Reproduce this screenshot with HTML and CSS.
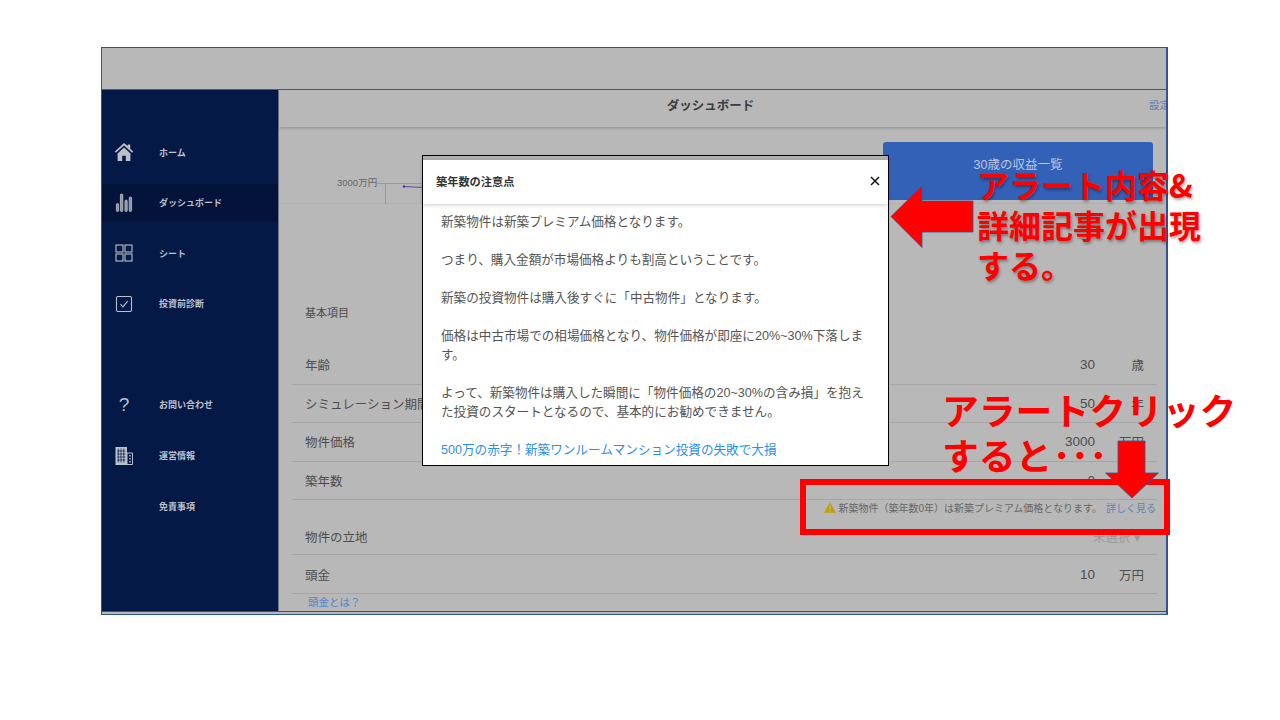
FILE: index.html
```html
<!DOCTYPE html>
<html lang="ja">
<head>
  <meta charset="UTF-8" />
  <title>ダッシュボード</title>
  <link rel="stylesheet" href="styles.css">
</head>
<body>
  <div class="frame">
    <div class="topband"></div>
    <div class="app">
      <nav class="side">
        <a class="nav-item">
          <svg class="nav-icon" viewBox="0 0 20 20"><path fill="#bcc0ca" d="M10 1 0.800 9.600l1 1.100L10 3.400l8.200 7.300 1-1.100-3-2.800V2.400h-2.400v1.700zM3.600 11.400V19h4.600v-5.200h3.600V19h4.600v-7.600L10 5.600z"/></svg>
          <span>ホーム</span>
        </a>
        <a class="nav-item active">
          <svg class="nav-icon" viewBox="0 0 20 20" fill="#8e94a3" stroke="#bcc0ca" stroke-width=".8"><rect x="2.400" y="10.500" width="2.200" height="8" rx="1"/><rect x="6.400" y="1" width="2.400" height="17.500" rx="1"/><rect x="11" y="7" width="2.200" height="11.500" rx="1"/><rect x="15.200" y="4" width="2.400" height="14.500" rx="1"/></svg>
          <span>ダッシュボード</span>
        </a>
        <a class="nav-item">
          <svg class="nav-icon" viewBox="0 0 20 20" fill="none" stroke="#bcc0ca" stroke-width="1.100"><rect x="2" y="2" width="7" height="7"/><rect x="11" y="2" width="7" height="7"/><rect x="2" y="11" width="7" height="7"/><rect x="11" y="11" width="7" height="7"/></svg>
          <span>シート</span>
        </a>
        <a class="nav-item">
          <svg class="nav-icon" viewBox="0 0 20 20" fill="none" stroke="#bcc0ca" stroke-width="1.100"><rect x="2.500" y="2.500" width="15" height="15" rx="1.500"/><path d="M6.500 10.200 9 12.800l4.600-5.600"/></svg>
          <span>投資前診断</span>
        </a>
        <div class="nav-gap"></div>
        <a class="nav-item">
          <span class="nav-icon q">?</span>
          <span>お問い合わせ</span>
        </a>
        <a class="nav-item">
          <svg class="nav-icon" viewBox="0 0 20 20"><path fill="#bcc0ca" d="M1.500 1h11.500v18H1.500z"/><path fill="none" stroke="#bcc0ca" stroke-width="1" d="M13 7h5.500v11.500H13z"/><path fill="#8e94a3" d="M15 9h2v1.500h-2zM15 12h2v1.500h-2zM15 15h2v1.500h-2z"/><path stroke="#051946" stroke-width=".7" d="M4.300 2.500v14M7 2.500v14M9.800 2.500v14M3 5h8.500M3 8h8.500M3 11h8.500M3 14h8.500"/></svg>
          <span>運営情報</span>
        </a>
        <a class="nav-item">
          <span class="nav-icon"></span>
          <span>免責事項</span>
        </a>
      </nav>

      <main class="main">
        <header class="head">
          <h1>ダッシュボード</h1>
          <a class="settings">設定</a>
        </header>
        <section class="top">
          <div class="chart">
            <span class="tick">3000万円</span>
            <svg class="plot" width="145" height="24" viewBox="0 0 145 24" fill="none">
              <path stroke="#9a9a9a" d="M0 3.500h46M8.500 3v21"/>
              <path stroke="#6a3fa8" d="M27 6.500l20 1"/>
              <circle cx="27" cy="6.500" r="1.200" fill="#5a2ea0"/>
            </svg>
          </div>
          <button class="summary">30歳の収益一覧</button>
        </section>

        <section class="form">
          <h2>基本項目</h2>
          <div class="row"><span>年齢</span><b>30</b><i>歳</i></div>
          <div class="row"><span>シミュレーション期間</span><b>50</b><i>年</i></div>
          <div class="row"><span>物件価格</span><b>3000</b><i>万円</i></div>
          <div class="row"><span>築年数</span><b>0</b><i></i></div>
          <div class="alert">
            <svg class="warn" viewBox="0 0 12 11"><path fill="#bfa100" d="M6 .3 11.800 10.700H.2z"/><path stroke="#b8b8b8" stroke-width="1.200" d="M6 3.800v3.600M6 8.200v1.300"/></svg>
            <span>新築物件（築年数0年）は新築プレミアム価格となります。</span>
            <a>詳しく見る</a>
          </div>
          <div class="row place"><span>物件の立地</span><em>未選択 ▾</em></div>
          <div class="row"><span>頭金</span><b>10</b><i>万円</i></div>
          <a class="help">頭金とは？</a>
        </section>
      </main>
    </div>

    <div class="modal">
      <div class="modal-head">
        <span>築年数の注意点</span>
        <svg class="close" viewBox="0 0 10 10"><path stroke="#111" stroke-width="1.500" d="M1 1l8 8M9 1l-8 8"/></svg>
      </div>
      <div class="modal-body">
        <p>新築物件は新築プレミアム価格となります。</p>
        <p>つまり、購入金額が市場価格よりも割高ということです。</p>
        <p>新築の投資物件は購入後すぐに「中古物件」となります。</p>
        <p>価格は中古市場での相場価格となり、物件価格が即座に20%~30%下落します。</p>
        <p>よって、新築物件は購入した瞬間に「物件価格の20~30%の含み損」を抱えた投資のスタートとなるので、基本的にお勧めできません。</p>
        <p><a>500万の赤字！新築ワンルームマンション投資の失敗で大損</a></p>
      </div>
    </div>
  </div>

  <div class="note note-a">アラート内容&amp;<br>詳細記事が出現<br>する。</div>
  <div class="note note-b">アラートクリック<br>すると･･･</div>
  <div class="redbox"></div>
  <svg class="arrow-left" width="86" height="64" viewBox="0 0 86 64"><path fill="#f00" stroke="#2f5597" stroke-width=".8" d="M1 31.500 32 1v15h51v31H32v15.500z"/></svg>
  <svg class="arrow-down" width="56" height="60" viewBox="0 0 56 60"><path fill="#f00" stroke="#2f5597" stroke-width=".8" d="M14 1h27v32h13.500L28 58 1.500 33H14z"/></svg>
</body>
</html>
```

FILE: styles.css
```css
body {
  margin: 0;
  background: #fff;
  font-family: "Liberation Sans", "Noto Sans CJK JP", sans-serif;
  color: #4d4d4d;
}
.frame {
  position: relative;
  box-sizing: border-box;
  width: 1067px;
  height: 568px;
  margin: 47px 0 0 101px;
  background: #b8b8b8;
  border: 1px solid #2f5597;
  border-top-color: #4a4f5a;
  border-right-width: 2px;
  overflow: hidden;
}
.topband {
  height: 41px;
  background: #b8b8b8;
  border-bottom: 1px solid #3f5d94;
}
.app {
  display: flex;
  box-sizing: border-box;
  height: 522px;
  border-bottom: 1px solid #2f5597;
}

/* sidebar */
.side {
  box-sizing: border-box;
  width: 177px;
  flex: none;
  padding-top: 43px;
  background: #051946;
  border-right: 1px solid #6d7488;
}
.nav-item {
  display: flex;
  align-items: center;
  height: 38px;
  margin-bottom: 12.600px;
  padding-left: 12px;
  font-size: 9px;
  font-weight: 700;
  color: #bcc0ca;
}
.nav-item.active {
  background: #04133a;
}
.nav-gap {
  height: 50.600px;
}
.nav-icon {
  width: 20px;
  height: 20px;
  margin-right: 25px;
  flex: none;
}
.q {
  font-size: 19px;
  font-weight: 400;
  line-height: 20px;
  text-align: center;
}

/* main column */
.main {
  flex: 1;
  min-width: 0;
  background: #b8b8b8;
}
.head {
  position: relative;
  box-sizing: border-box;
  height: 37px;
  padding: 0 24px 8px 0;
  display: flex;
  align-items: center;
  justify-content: center;
  box-shadow: 0 1px 3px rgba(0, 0, 0, 0.22);
}
.head h1 {
  margin: 0;
  font-size: 12.500px;
  font-weight: 700;
  color: #3c3c3c;
}
.settings {
  position: absolute;
  top: 7px;
  right: -7px;
  width: 24px;
  font-size: 10.500px;
  color: #5f7fb8;
}
.top {
  display: flex;
  justify-content: space-between;
  height: 161px;
  padding: 15px 13px 0 58px;
  background: linear-gradient(#b0b0b0, #b0b0b0) 0 76px / 100% 1px no-repeat;
}
.chart {
  display: flex;
  align-items: flex-start;
  width: 190px;
  margin-top: 33px;
}
.tick {
  width: 40px;
  font-size: 9.500px;
  white-space: nowrap;
  color: #666;
}
.plot {
  margin-top: 5px;
}
.summary {
  box-sizing: border-box;
  width: 270px;
  height: 58px;
  padding: 0 0 16px;
  border: 0;
  border-radius: 3px;
  background: #3361b8;
  font: inherit;
  font-size: 12.500px;
  color: #b9c6df;
}

/* form rows */
.form {
  margin: 0 9px 0 13px;
}
.form h2 {
  margin: 0;
  padding-left: 13px;
  font-size: 11px;
  font-weight: 400;
  line-height: 20px;
}
.row {
  display: flex;
  align-items: center;
  box-sizing: border-box;
  height: 38.600px;
  padding-left: 13px;
  border-bottom: 1px solid #a6a6a6;
  font-size: 12.500px;
}
.row:first-of-type {
  margin-top: 23px;
}
.row span {
  flex: 1;
}
.row b {
  width: 60px;
  font-weight: 400;
  font-size: 13.500px;
  text-align: right;
}
.row i {
  width: 49px;
  margin-right: 13px;
  font-style: normal;
  text-align: right;
}
.row em {
  margin-right: 16px;
  font-style: normal;
  font-size: 12.500px;
  color: #9a9a9a;
}
.alert {
  display: flex;
  align-items: center;
  justify-content: flex-end;
  box-sizing: border-box;
  height: 16px;
  padding-bottom: 2px;
  font-size: 10px;
  color: #666;
}
.warn {
  width: 12px;
  height: 11px;
  margin-right: 2px;
}
.alert a {
  margin: 0 1px 0 4px;
  color: #5f82b8;
}
.row.place {
  height: 39px;
  padding-top: 2px;
}
.help {
  display: block;
  padding-left: 16px;
  font-size: 10.500px;
  line-height: 17px;
  color: #5580c4;
}

/* modal */
.modal {
  position: absolute;
  left: 320px;
  top: 107px;
  box-sizing: border-box;
  width: 467px;
  height: 311px;
  padding-top: 4px;
  background: #fff;
  border: 1px solid #000;
  box-shadow: inset 0 4px 0 #b0b0b0;
}
.modal-head {
  display: flex;
  align-items: center;
  justify-content: space-between;
  box-sizing: border-box;
  height: 44px;
  padding: 0 8px 2px 13px;
  font-size: 11.200px;
  font-weight: 700;
  color: #333;
  box-shadow: 0 1px 4px rgba(0, 0, 0, 0.2);
}
.close {
  width: 10px;
  height: 10px;
}
.modal-body {
  padding: 8.500px 18px 0;
  font-size: 12.600px;
  line-height: 19px;
  color: #555;
}
.modal-body p {
  margin: 0 0 19px;
}
.modal-body a {
  color: #2b8ff0;
}

/* slide annotations on top of the screenshot */
.note {
  position: absolute;
  font-family: "Noto Sans CJK JP", sans-serif;
  font-weight: 700;
  color: #f00;
  white-space: nowrap;
}
.note-a {
  left: 977px;
  top: 164px;
  font-size: 32px;
  line-height: 40px;
  text-shadow: 1px 2px 3px rgba(0, 0, 0, 0.35);
}
.note-b {
  left: 942px;
  top: 387px;
  font-size: 36.800px;
  line-height: 45px;
}
.redbox {
  position: absolute;
  left: 800px;
  top: 479px;
  box-sizing: border-box;
  width: 370px;
  height: 56px;
  border: 6px solid #f00;
}
.arrow-left {
  position: absolute;
  left: 890px;
  top: 185px;
}
.arrow-down {
  position: absolute;
  left: 1104px;
  top: 440px;
}
```
